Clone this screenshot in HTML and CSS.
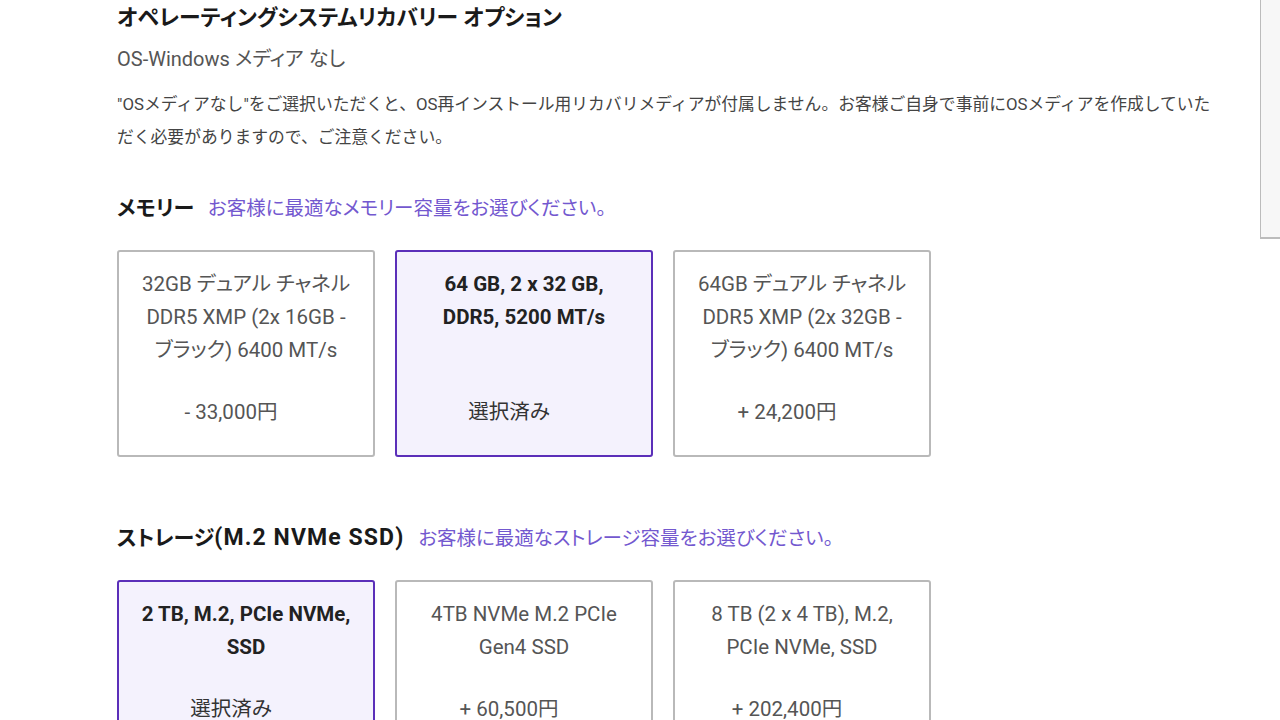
FILE: index.html
```html
<!DOCTYPE html>
<html lang="ja">
<head>
<meta charset="utf-8">
<title>構成オプション</title>
<link rel="stylesheet" href="styles.css">
</head>
<body>
<div class="page">
  <section class="os-section">
    <h2 class="title">オペレーティングシステムリカバリー オプション</h2>
    <div class="os-value">OS-Windows メディア なし</div>
    <p class="note">"OSメディアなし"をご選択いただくと、OS再インストール用リカバリメディアが付属しません。お客様ご自身で事前にOSメディアを作成していただく必要がありますので、ご注意ください。</p>
  </section>

  <section class="option-section">
    <div class="section-head">
      <h3 class="section-title">メモリー</h3>
      <span class="section-sub">お客様に最適なメモリー容量をお選びください。</span>
    </div>
    <div class="cards">
      <div class="card">
        <div class="card-desc">32GB デュアル チャネル<br>DDR5 XMP (2x 16GB -<br>ブラック) 6400 MT/s</div>
        <div class="card-price">- 33,000円</div>
      </div>
      <div class="card selected">
        <div class="card-desc">64 GB, 2 x 32 GB,<br>DDR5, 5200 MT/s</div>
        <div class="card-price">選択済み</div>
      </div>
      <div class="card">
        <div class="card-desc">64GB デュアル チャネル<br>DDR5 XMP (2x 32GB -<br>ブラック) 6400 MT/s</div>
        <div class="card-price">+ 24,200円</div>
      </div>
    </div>
  </section>

  <section class="option-section storage">
    <div class="section-head">
      <h3 class="section-title">ストレージ<span class="latin">(M.2 NVMe SSD)</span></h3>
      <span class="section-sub">お客様に最適なストレージ容量をお選びください。</span>
    </div>
    <div class="cards">
      <div class="card selected">
        <div class="card-desc">2 TB, M.2, PCIe NVMe,<br>SSD</div>
        <div class="card-price">選択済み</div>
      </div>
      <div class="card">
        <div class="card-desc">4TB NVMe M.2 PCIe<br>Gen4 SSD</div>
        <div class="card-price">+ 60,500円</div>
      </div>
      <div class="card">
        <div class="card-desc">8 TB (2 x 4 TB), M.2,<br>PCIe NVMe, SSD</div>
        <div class="card-price">+ 202,400円</div>
      </div>
    </div>
  </section>
</div>
<div class="side-panel"></div>
</body>
</html>
```

FILE: styles.css
```css
html, body {
  margin: 0;
  padding: 0;
  background: #ffffff;
  height: 720px;
  overflow: hidden;
}

body {
  font-family: Roboto, "Noto Sans CJK JP", sans-serif;
  font-feature-settings: "palt" 1;
  color: #444;
  position: relative;
}

.page {
  padding-left: 117px;
  width: 1100px;
}

.title {
  margin: 0;
  font-size: 21.8px;
  line-height: 36px;
  font-weight: 700;
  color: #1a1a1a;
}

.os-value {
  margin-top: 8px;
  font-size: 20px;
  line-height: 30px;
  color: #555;
}

.note {
  margin: 14px 0 0;
  font-size: 16.8px;
  line-height: 33px;
  color: #444;
  width: 1100px;
  font-feature-settings: normal;
}

.option-section {
  margin-top: 36px;
}

.option-section.storage {
  margin-top: 63px;
}

.section-head {
  display: flex;
  align-items: baseline;
  gap: 14px;
  height: 36px;
  line-height: 36px;
}

.section-title {
  margin: 0;
  font-size: 21px;
  font-weight: 700;
  color: #1a1a1a;
}

.section-title .latin {
  font-size: 23px;
  letter-spacing: 1.1px;
}

.section-sub {
  font-size: 19.5px;
  color: #7358cf;
}

.cards {
  margin-top: 24px;
  display: flex;
  gap: 20px;
  align-items: stretch;
}

.card {
  width: 258px;
  box-sizing: border-box;
  border: 2px solid #b9b9b9;
  border-radius: 3px;
  background: #fff;
  padding: 16px 4px 26.5px;
  display: flex;
  flex-direction: column;
  align-items: center;
  text-align: center;
  font-size: 20.5px;
  line-height: 33px;
  color: #555;
  white-space: nowrap;
}

.card-desc {
  margin-bottom: 28.5px;
}

.card-price {
  margin-top: auto;
  padding-right: 30px;
}

.card.selected {
  border-color: #5b2fb9;
  background: #f4f2fd;
}

.card.selected .card-desc {
  font-weight: 700;
  color: #222;
}

.card.selected .card-price {
  color: #333;
}

.side-panel {
  position: absolute;
  top: 0;
  right: 0;
  width: 19px;
  height: 237px;
  background: #f7f7f7;
  border-left: 1px solid #bcbcbc;
  border-bottom: 2px solid #bcbcbc;
}
```
